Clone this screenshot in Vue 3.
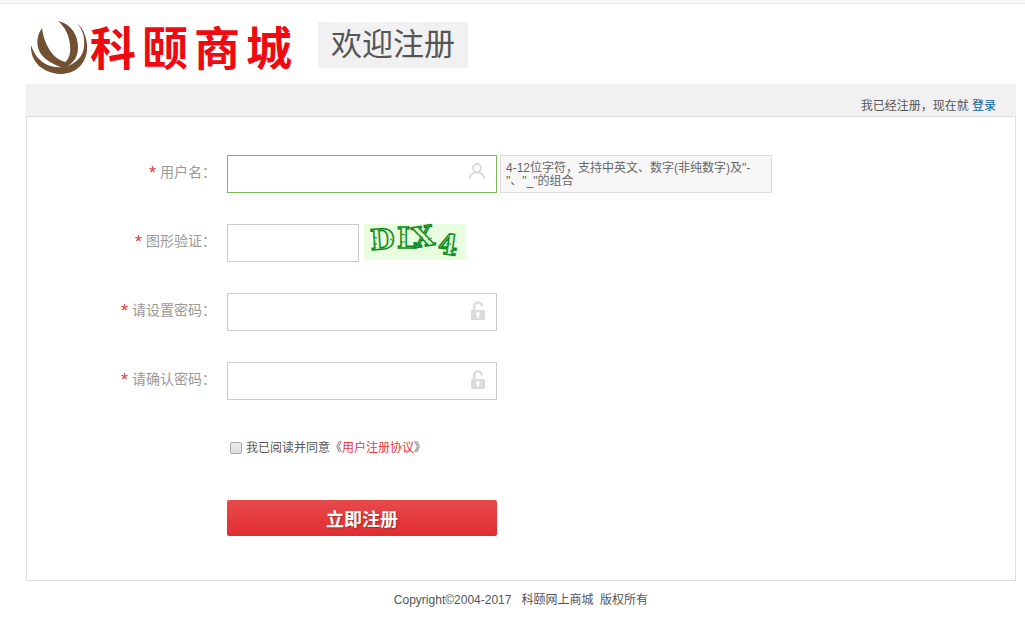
<script setup>
import { ref } from 'vue'

const username = ref('')
const captcha = ref('')
const password = ref('')
const confirmation = ref('')
const agreed = ref(false)
const brand = ['科', '颐', '商', '城']
</script>

<template>
  <div class="page">
    <div class="topbar"></div>
    <div class="wrap">
      <header class="header">
        <a class="logo" href="#">
          <svg class="mark" width="60" height="57" viewBox="0 0 60 57" fill="#725034" aria-hidden="true">
            <path d="M2 27C5 36 9 41 15 45C21 49 28 50 36 49C46 46 54 39 55 29C56 20 54 12 48 5C55 11 59 22 58 33C56 47 46 56 31 56C13 55 1 43 2 27Z" />
            <path d="M13 10C7 18 7 29 12 36C17 43 26 47 34 50L40 45C30 43 24 38 20 31C16 24 14 18 13 10Z" />
            <path d="M29 3C43 6 49 18 49 29C49 38 46 44 36 50L33 46C40 43 42 36 41 27C40 17 36 9 29 3Z" />
          </svg>
          <span class="brand"><span v-for="c in brand" :key="c">{{ c }}</span></span>
        </a>
        <h1 class="welcome">欢迎注册</h1>
      </header>

      <div class="strip">我已经注册，现在就 <a href="#">登录</a></div>

      <form class="panel" @submit.prevent>
        <div class="row">
          <label for="username"><em>*</em> 用户名：</label>
          <div class="field active">
            <input id="username" v-model="username" type="text">
            <svg width="18" height="18" viewBox="0 0 18 18" fill="none" stroke="#dcdcdc" stroke-width="2" aria-hidden="true">
              <circle cx="9" cy="5" r="4" />
              <path d="M2 16C2 11.5 5 9.5 9 9.5S16 11.5 16 16" />
            </svg>
          </div>
          <p class="tip">4-12位字符，支持中英文、数字(非纯数字)及"-<br>"、"_"的组合</p>
        </div>

        <div class="row">
          <label for="captcha"><em>*</em> 图形验证：</label>
          <div class="field short">
            <input id="captcha" v-model="captcha" type="text">
          </div>
          <svg class="captcha" width="102" height="36" viewBox="0 0 102 36" role="img" aria-label="验证码">
            <g class="letters">
              <text x="7" y="26" transform="rotate(-4 7 26)">D</text>
              <text x="33" y="24">L</text>
              <text x="50" y="24" transform="rotate(-9 50 24)">X</text>
              <text x="73" y="29" transform="rotate(8 73 29)">4</text>
            </g>
            <path d="M9 13l4 1M9 20h4M26 15l4 2M37 10l4 1M36 18h5M55 11l4 3M64 16l4-2M82 20h5M86 27h4" stroke="#16902a" />
          </svg>
        </div>

        <div class="row">
          <label for="password"><em>*</em> 请设置密码：</label>
          <div class="field">
            <input id="password" v-model="password" type="password">
            <svg width="16" height="20" viewBox="0 0 16 20" aria-hidden="true">
              <path d="M4.2 10V5.5C4.2 0 11.8 0 11.8 5.5" fill="none" stroke="#dcdcdc" stroke-width="2.4" />
              <rect x="1" y="9" width="14" height="10" rx="1" fill="#dcdcdc" />
              <path d="M8 11a2 2 0 0 1 1 3.7V17H7v-2.3a2 2 0 0 1 1-3.7z" fill="#fff" />
            </svg>
          </div>
        </div>

        <div class="row">
          <label for="confirmation"><em>*</em> 请确认密码：</label>
          <div class="field">
            <input id="confirmation" v-model="confirmation" type="password">
            <svg width="16" height="20" viewBox="0 0 16 20" aria-hidden="true">
              <path d="M4.2 10V5.5C4.2 0 11.8 0 11.8 5.5" fill="none" stroke="#dcdcdc" stroke-width="2.4" />
              <rect x="1" y="9" width="14" height="10" rx="1" fill="#dcdcdc" />
              <path d="M8 11a2 2 0 0 1 1 3.7V17H7v-2.3a2 2 0 0 1 1-3.7z" fill="#fff" />
            </svg>
          </div>
        </div>

        <div class="agree">
          <input id="agree" v-model="agreed" type="checkbox">
          <span><label for="agree">我已阅读并同意</label>《<a href="#">用户注册协议</a>》</span>
        </div>

        <button class="submit" type="submit">立即注册</button>
      </form>

      <footer class="footer">Copyright©2004-2017 &nbsp; 科颐网上商城&nbsp; 版权所有</footer>
    </div>
  </div>
</template>

<style>
body {
  margin: 0;
  background: #fff;
}
</style>

<style scoped>
* {
  box-sizing: border-box;
}
.page {
  font: 12px/18px "Liberation Sans", "Noto Sans CJK SC", sans-serif;
  color: #555;
}
.topbar {
  height: 4px;
  background: #f6f6f6;
  border-bottom: 1px solid #e8e8e8;
}
.wrap {
  padding: 0 9px 0 26px;
}
a {
  text-decoration: none;
}
.header {
  display: flex;
  align-items: flex-start;
  gap: 22px;
  height: 80px;
  padding: 14px 0 0 3px;
}
.logo {
  display: flex;
  align-items: center;
  gap: 1px;
  width: 267px;
  color: #ee0a10;
}
.mark {
  display: block;
  flex: none;
}
.brand {
  display: flex;
  gap: 6px;
  font-family: "Noto Sans CJK SC", sans-serif;
  font-size: 46px;
  line-height: 52px;
  padding-bottom: 4px;
  font-weight: 700;
}
.welcome {
  margin: 4px 0 0;
  padding: 0 13px;
  background: #f1f1f1;
  font-size: 31px;
  line-height: 46px;
  font-weight: 400;
}
.strip {
  height: 32px;
  padding: 13px 20px 0 0;
  background: #f1f1f1;
  text-align: right;
}
.strip a {
  color: #005ea7;
}
.panel {
  padding: 38px 0 44px;
  border: 1px solid #ddd;
}
.row {
  display: flex;
  align-items: flex-start;
  height: 38px;
  margin-bottom: 31px;
}
.row > label {
  width: 189px;
  margin-right: 11px;
  font-size: 14px;
  line-height: 34px;
  color: #999;
  text-align: right;
}
em {
  font-style: normal;
  font-size: 18px;
  line-height: 18px;
  vertical-align: -2px;
  color: #e4393c;
}
.field {
  display: flex;
  align-items: flex-start;
  justify-content: space-between;
  width: 270px;
  height: 38px;
  padding: 7px 10px;
  border: 1px solid #ccc;
}
.field.active {
  border-color: #7abd54;
}
.field.short {
  width: 132px;
}
.field input {
  flex: 1;
  min-width: 0;
  height: 22px;
  padding: 0;
  border: 0;
  outline: 0;
  background: transparent;
  font: inherit;
  font-size: 14px;
}
.tip {
  width: 272px;
  height: 38px;
  margin: 0 0 0 3px;
  padding: 6px 5px;
  border: 1px solid #ddd;
  background: #f7f7f7;
  color: #666;
  line-height: 13px;
  white-space: nowrap;
}
.captcha {
  display: block;
  margin-left: 5px;
  overflow: visible;
  background: #e9fddf;
}
.letters {
  font: 700 28px "DejaVu Serif", serif;
  fill: #dff5d0;
  stroke: #0c8a22;
  stroke-width: 1.5px;
}
.agree {
  display: flex;
  align-items: center;
  gap: 4px;
  margin: 39px 0 43px 203px;
}
.agree input {
  appearance: none;
  width: 12px;
  height: 12px;
  margin: 0;
  border: 1px solid #aaa;
  border-radius: 2px;
  background: linear-gradient(#eee, #dcdcdc);
}
.agree input:checked {
  background: #777;
}
.agree a {
  color: #e4393c;
}
.submit {
  display: block;
  width: 270px;
  height: 36px;
  margin-left: 200px;
  padding: 0;
  border: 0;
  border-radius: 2px;
  background: linear-gradient(#e94a4c, #df2d31);
  color: #fff;
  font: 700 18px/36px "Noto Sans CJK SC", sans-serif;
  text-shadow: 1px 1px 1px #a52a2a;
  cursor: pointer;
}
.footer {
  padding: 10px 0;
  text-align: center;
}
</style>
